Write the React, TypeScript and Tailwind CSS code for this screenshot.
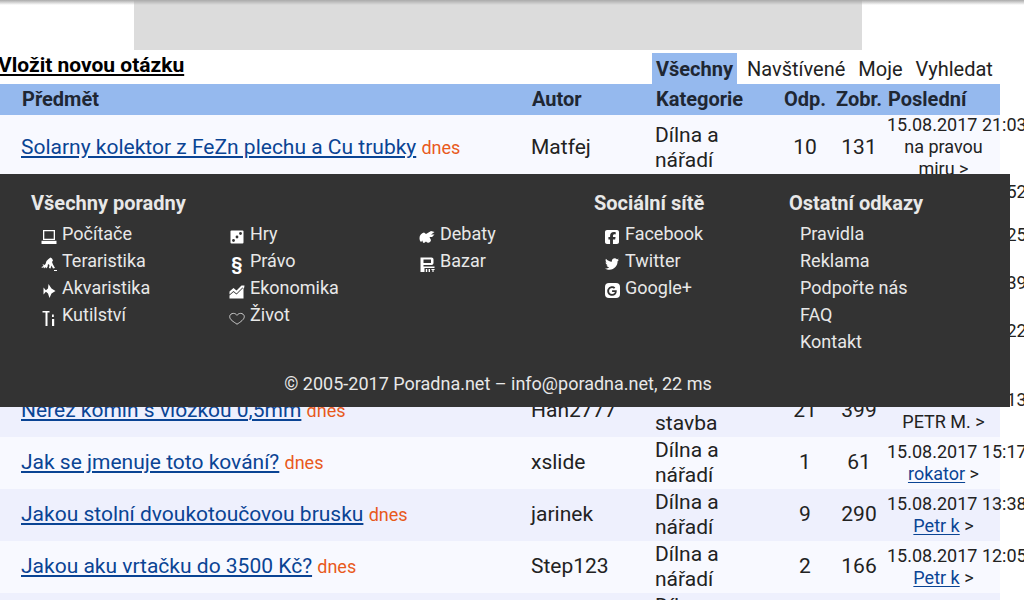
import { FaSquareFacebook, FaTwitter, FaGoogle } from 'react-icons/fa6'
import type { ReactNode } from 'react'

type Row = {
  subject: string
  author: string
  category: string[]
  replies: number
  views: number
  date: string
  last: string
  lastLink: boolean
  rowClass: string
  lastClass: string
}

const rows: Row[] = [
  { subject: 'Solarny kolektor z FeZn plechu a Cu trubky', author: 'Matfej', category: ['Dílna a', 'nářadí'], replies: 10, views: 131, date: '15.08.2017 21:03', last: 'na pravou miru', lastLink: false, rowClass: 'h-[62px] pt-[3px] bg-[#f8f9ff]', lastClass: 'self-center -mt-[2px]' },
  { subject: 'Kotel na tuhá paliva', author: 'Pavel', category: ['Dům a', 'stavba'], replies: 4, views: 88, date: '15.08.2017 20:52', last: 'Pavel', lastLink: true, rowClass: 'h-[43px] bg-[#eef0fd]', lastClass: 'self-start pt-[4px]' },
  { subject: 'Oprava sekačky', author: 'Honza', category: ['Dílna a', 'nářadí'], replies: 3, views: 102, date: '15.08.2017 20:25', last: 'Honza', lastLink: true, rowClass: 'h-[48px] bg-[#f8f9ff]', lastClass: 'self-start pt-[4px]' },
  { subject: 'Vrtání do betonu', author: 'Karel', category: ['Dílna a', 'nářadí'], replies: 6, views: 147, date: '15.08.2017 19:39', last: 'Karel', lastLink: true, rowClass: 'h-[48px] bg-[#eef0fd]', lastClass: 'self-start pt-[4px]' },
  { subject: 'Izolace podkroví', author: 'Milan', category: ['Dům a', 'stavba'], replies: 8, views: 215, date: '15.08.2017 18:22', last: 'Milan', lastLink: true, rowClass: 'h-[69px] bg-[#f8f9ff]', lastClass: 'self-start pt-[4px]' },
  { subject: 'Nerez komín s vložkou 0,5mm', author: 'Han2777', category: ['Dům a', 'stavba'], replies: 21, views: 399, date: '15.08.2017 17:13', last: 'PETR M.', lastLink: false, rowClass: 'h-[52px] bg-[#eef0fd]', lastClass: 'self-center' },
  { subject: 'Jak se jmenuje toto kování?', author: 'xslide', category: ['Dílna a', 'nářadí'], replies: 1, views: 61, date: '15.08.2017 15:17', last: 'rokator', lastLink: true, rowClass: 'h-[52px] bg-[#f8f9ff]', lastClass: 'self-center' },
  { subject: 'Jakou stolní dvoukotoučovou brusku', author: 'jarinek', category: ['Dílna a', 'nářadí'], replies: 9, views: 290, date: '15.08.2017 13:38', last: 'Petr k', lastLink: true, rowClass: 'h-[52px] bg-[#eef0fd]', lastClass: 'self-center' },
  { subject: 'Jakou aku vrtačku do 3500 Kč?', author: 'Step123', category: ['Dílna a', 'nářadí'], replies: 2, views: 166, date: '15.08.2017 12:05', last: 'Petr k', lastLink: true, rowClass: 'h-[52px] bg-[#f8f9ff]', lastClass: 'self-center' },
  { subject: 'Oprava kompresoru', author: 'Jirka', category: ['Dílna a', 'nářadí'], replies: 5, views: 120, date: '15.08.2017 10:09', last: 'Jirka', lastLink: true, rowClass: 'h-[52px] bg-[#eef0fd]', lastClass: 'self-center' },
]

const Laptop = () => (
  <svg viewBox="0 0 16 16" className="h-4 w-4" fill="#fff">
    <path d="M2 1h12v10H2zM3.300 2.300v7.400h9.400V2.300z" fillRule="evenodd" />
    <path d="M0.500 11.800h15V15H0.500z" />
  </svg>
)

const Lizard = () => (
  <svg viewBox="0 0 16 16" className="h-4 w-4" fill="#fff">
    <path d="M0.500 11l2-1-1-2 2 1 1-1 1-3 2-2 2-1.500 1.500 1 1 2-1 1.500 1 2.500 2 3.500-2 .5-1.500-3-1 3-1.500-.5.500-3-1.500-1-.5 3-1.500 1.500-.5-1.500-1.500 1.500-.5-1.500-1.500 1z" />
    <path d="M13 14h3v1h-3z" />
  </svg>
)

const Fish = () => (
  <svg viewBox="0 0 16 16" className="h-4 w-4" fill="#fff">
    <path d="M4 8l3-2.500L7.500 1 10.500 5.500 14.500 8l-4 2.500L8.500 15 7 10.500z" />
    <path d="M2.500 4.500L5.500 8l-3 3.500z" />
  </svg>
)

const Tools = () => (
  <svg viewBox="0 0 16 16" className="h-4 w-4" fill="#fff">
    <path d="M1.500 1h7v1.500H6.500V16h-2V2.500h-3z" />
    <path d="M11 4.500h1.800v2.500H11zM11 9h2.200v7H11z" />
  </svg>
)

const Dice = () => (
  <svg viewBox="0 0 14 14" className="h-[14px] w-[14px]">
    <rect x="0.500" y="0.500" width="13" height="13" rx="1" fill="#fff" />
    <circle cx="3.500" cy="10.500" r="1.400" fill="#333" />
    <circle cx="7" cy="7" r="1.400" fill="#333" />
    <circle cx="10.500" cy="3.500" r="1.400" fill="#333" />
  </svg>
)

const Chart = () => (
  <svg viewBox="0 0 16 16" className="h-4 w-4" fill="#fff">
    <path d="M0.500 8.500l4-3.500 3 2.500 5-5 3 0-.5 3-1.500-1-6 6-3-2.500-4 3.500z" />
    <path d="M0.500 12.500l4-3.500 3 2.500 7-7V15.500H0.500z" />
  </svg>
)

const Heart = () => (
  <svg viewBox="0 0 18 16" className="h-4 w-[18px]" fill="none" stroke="#ddd" strokeWidth="1">
    <path d="M9 15C5 12 .800 10 .800 6.500.800 4 3 2.800 5 2.800c2 0 3 1 4 2.200 1-1.500 2.500-2.200 4-2.200 2.200 0 4.200 1.500 4.200 3.700C17.200 9.500 13 12.500 9 15z" />
  </svg>
)

const Debate = () => (
  <svg viewBox="0 0 16 16" className="h-4 w-4" fill="#fff">
    <path d="M0.500 9c0-3 2-4.500 4.500-5.500L7 5l5-3 3.500 1-3.500 2.500h3.500L13 8h-2.500l1.500 3c-.5 3-3.500 3.500-5 1.500L5 14c-1 0-1.500-1-1.500-2.500L2 13C1 12 .500 11 .500 9z" />
  </svg>
)

const PNet = () => (
  <svg viewBox="0 0 16 16" className="h-4 w-4" fill="#fff">
    <path d="M1.500 1.500h11c1.200 0 2 .8 2 2v3.500c0 1.200-.8 2-2 2h-8v1.500h11V12H5.500v4h-4zM4.500 3.500v3.500h7.500V3.500z" fillRule="evenodd" />
    <path d="M6.800 13h1.400v3H6.800zM9.600 13h1.400v3H9.600zM12.400 13h3.200v1h-1v2h-1.200v-2h-1z" />
  </svg>
)

const Section = () => <span className="w-4 text-center text-[18px] font-bold leading-4 text-white">§</span>

const GoogleBox = () => (
  <span className="flex h-[15px] w-[15px] items-center justify-center rounded-[4px] bg-white text-[#333]">
    <FaGoogle className="h-[10px] w-[10px]" />
  </span>
)

const FooterItem = ({ icon, label, pad }: { icon?: ReactNode; label: string; pad?: string }) => (
  <li className={`flex h-[27px] items-center ${pad ?? ''}`}>
    {icon && <span className="mr-[5px] flex h-[27px] w-4 shrink-0 translate-y-[3px] items-center justify-center">{icon}</span>}
    <span>{label}</span>
  </li>
)

export default function App() {
  return (
    <div className="relative h-[600px] w-[1024px] overflow-hidden bg-white font-['Roboto',sans-serif] text-[20px] text-[#222]">
      <div className="absolute left-0 right-0 top-0 z-10 h-[5px] bg-gradient-to-b from-[#aaa] to-transparent" />

      <div className="ml-[134px] h-[50px] w-[728px] bg-[#dcdcdc]" />

      <div className="flex h-[34px] w-[1000px] items-end justify-between">
        <a className="-ml-[2px] mb-[7px] text-[21px] font-bold leading-[24px] text-black underline decoration-2 underline-offset-[2px]">Vložit novou otázku</a>
        <div className="flex h-[31px] w-[348px] items-center">
          <span className="flex h-[31px] w-[85px] items-center justify-center bg-[#95b9ee] font-bold text-[#1f2733]">Všechny</span>
          <span className="ml-[10px]">Navštívené</span>
          <span className="ml-[13px]">Moje</span>
          <span className="ml-[13px]">Vyhledat</span>
        </div>
      </div>

      <div className="w-[1000px]">
        <div className="flex h-[31px] items-center bg-[#95b9ee] pb-[2px] font-bold text-[#1f2733]">
          <div className="w-[532px] pl-[22px]">Předmět</div>
          <div className="w-[124px]">Autor</div>
          <div className="w-[120px]">Kategorie</div>
          <div className="w-[58px] text-center">Odp.</div>
          <div className="w-[50px] text-center">Zobr.</div>
          <div className="ml-[4px]">Poslední</div>
        </div>

        {rows.map((row) => (
          <div key={row.subject} className={`flex items-center text-[21px] ${row.rowClass}`}>
            <div className="w-[532px] pl-[21px]">
              <a className="text-[#0a4494] underline underline-offset-[2px]">{row.subject}</a>{' '}
              <span className="text-[18px] text-[#e85a1c]">dnes</span>
            </div>
            <div className="w-[124px] -translate-x-[1px]">{row.author}</div>
            <div className="w-[120px] -translate-x-[1px] leading-[25px]">
              {row.category.map((line) => (
                <div key={line}>{line}</div>
              ))}
            </div>
            <div className="w-[58px] text-center">{row.replies}</div>
            <div className="w-[50px] text-center">{row.views}</div>
            <div className={`ml-[3px] w-[113px] text-center text-[18px] leading-[22px] ${row.lastClass}`}>
              <div className="whitespace-nowrap text-left">{row.date}</div>
              <div>
                {row.lastLink ? <a className="text-[#0a4494] underline underline-offset-[2px]">{row.last}</a> : row.last} &gt;
              </div>
            </div>
          </div>
        ))}
      </div>

      <div className="absolute left-0 top-[174px] z-20 h-[233px] w-[1010px] bg-[#333] text-[18px] text-[#e8e8e8]">
        <div className="flex pl-[31px] pt-[14px]">
          <div className="w-[563px]">
            <h3 className="h-[32px] text-[20px] font-bold leading-[30px]">Všechny poradny</h3>
            <div className="flex">
              <ul className="w-[189px] pl-[10px]">
                <FooterItem icon={<Laptop />} label="Počítače" />
                <FooterItem icon={<Lizard />} label="Teraristika" />
                <FooterItem icon={<Fish />} label="Akvaristika" />
                <FooterItem icon={<Tools />} label="Kutilství" />
              </ul>
              <ul className="w-[189px] pl-[10px]">
                <FooterItem icon={<Dice />} label="Hry" pad="-ml-[1px]" />
                <FooterItem icon={<Section />} label="Právo" pad="-ml-[1px]" />
                <FooterItem icon={<Chart />} label="Ekonomika" pad="-ml-[1px]" />
                <FooterItem icon={<Heart />} label="Život" pad="-ml-[1px]" />
              </ul>
              <ul className="pl-[10px]">
                <FooterItem icon={<Debate />} label="Debaty" />
                <FooterItem icon={<PNet />} label="Bazar" />
              </ul>
            </div>
          </div>
          <div className="w-[195px]">
            <h3 className="h-[32px] text-[20px] font-bold leading-[30px]">Sociální sítě</h3>
            <ul className="pl-[10px]">
              <FooterItem icon={<FaSquareFacebook className="h-4 w-4 text-white" />} label="Facebook" />
              <FooterItem icon={<FaTwitter className="h-[14px] w-[14px] text-white" />} label="Twitter" />
              <FooterItem icon={<GoogleBox />} label="Google+" />
            </ul>
          </div>
          <div>
            <h3 className="h-[32px] text-[20px] font-bold leading-[30px]">Ostatní odkazy</h3>
            <ul className="pl-[11px]">
              <FooterItem label="Pravidla" />
              <FooterItem label="Reklama" />
              <FooterItem label="Podpořte nás" />
              <FooterItem label="FAQ" />
              <FooterItem label="Kontakt" />
            </ul>
          </div>
        </div>
        <p className="mt-[17px] pr-[14px] text-center text-[18px] leading-[24px]">© 2005-2017 Poradna.net – info@poradna.net, 22 ms</p>
      </div>
    </div>
  )
}
